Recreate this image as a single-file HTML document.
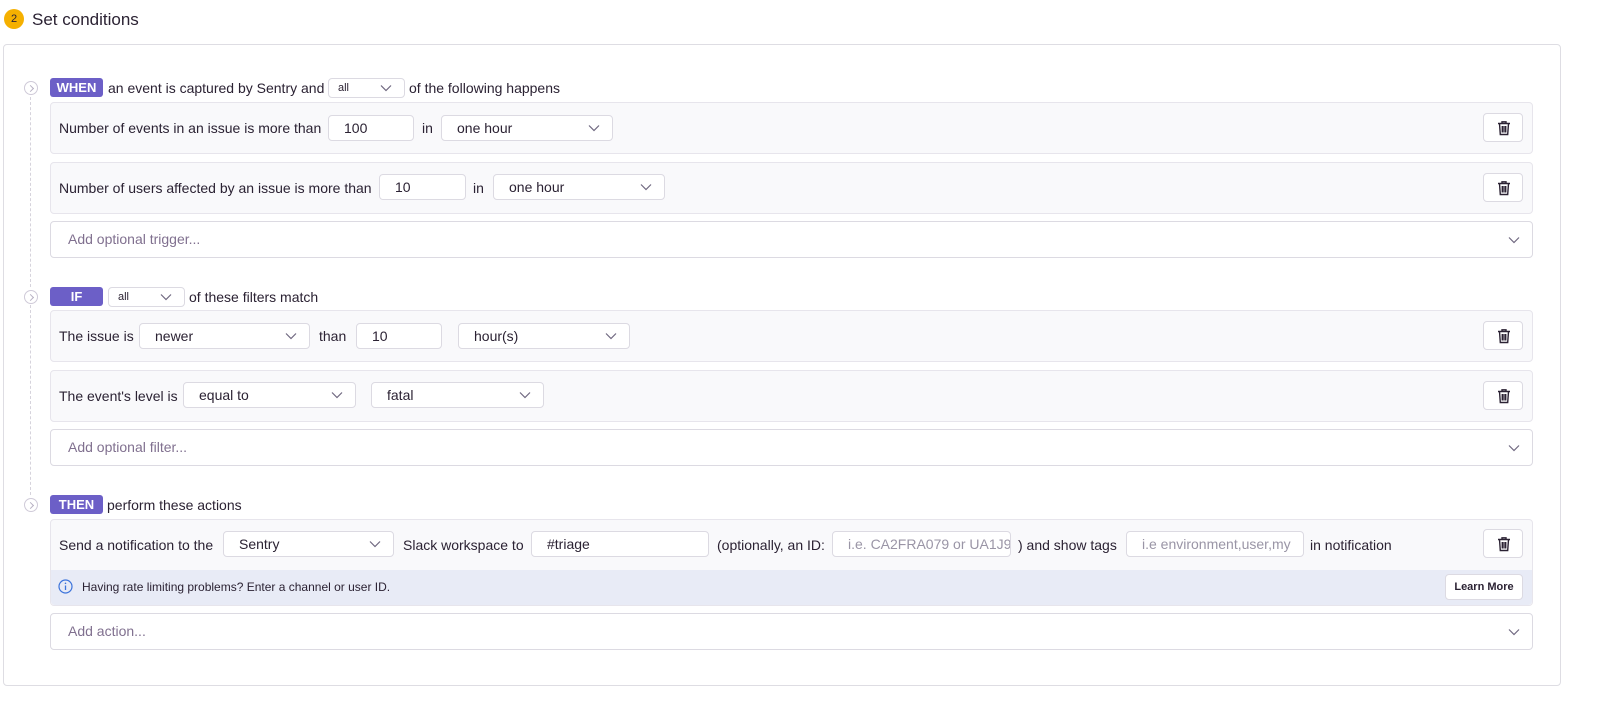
<!DOCTYPE html>
<html><head><meta charset="utf-8"><style>
*{box-sizing:border-box;margin:0;padding:0}
body{width:1600px;height:704px;background:#fff;font-family:"Liberation Sans",sans-serif;font-size:14px;color:#2b2233;position:relative;overflow:hidden}
.a{position:absolute}
.t{position:absolute;white-space:nowrap;line-height:16px}
.box{position:absolute;border:1px solid #e2e0e7;border-radius:4px}
.row{position:absolute;left:50px;width:1483px;background:#f9f9fb;border:1px solid #e7e5ec;border-radius:4px}
.inp{position:absolute;background:#fff;border:1px solid #dcdae2;border-radius:4px;height:26px;line-height:24px;padding-left:15px;white-space:nowrap;overflow:hidden}
.ph{color:#9a95a6}
.chev{position:absolute;right:12px;top:8px;width:12px;height:8px}
.badge{position:absolute;left:50px;width:53px;height:19px;background:#6c5fc7;color:#fff;font-weight:bold;border-radius:3px;text-align:center;line-height:19px;font-size:13px}
.bul{position:absolute;left:24px;width:14px;height:14px;border:1px solid #cfcad8;border-radius:50%;background:#fff}
.bul::after{content:"";position:absolute;left:3px;top:3.5px;width:4px;height:4px;border-right:1px solid #b8b2c4;border-top:1px solid #b8b2c4;transform:rotate(45deg)}
.trash{position:absolute;left:1483px;width:40px;height:29px;background:#fff;border:1px solid #dcdae2;border-radius:4px}
.add{position:absolute;left:50px;width:1483px;height:37px;background:#fff;border:1px solid #dcdae2;border-radius:4px;color:#80708f;padding-left:17px;line-height:35px}
</style></head><body>
<div class="a" style="left:4px;top:9px;width:20px;height:20px;border-radius:50%;background:#f5b000;font-size:11px;text-align:center;line-height:20px;color:#2b2233">2</div>
<div class="t" style="left:32px;top:10px;font-size:17px;line-height:20px">Set conditions</div>
<div class="box" style="left:3px;top:44px;width:1558px;height:642px;border-color:#dedde3"></div>
<div class="a" style="left:30px;top:97px;height:190px;border-left:1px dashed #d6d3dc"></div>
<div class="a" style="left:30px;top:305px;height:190px;border-left:1px dashed #d6d3dc"></div>

<svg width="0" height="0" style="position:absolute"><defs>
<symbol id="cv" viewBox="0 0 12 8"><path d="M1 1.5 L6 6.5 L11 1.5" fill="none" stroke="#6f6880" stroke-width="1.2"/></symbol>
<symbol id="tr" viewBox="0 0 16 16"><path d="M2 3.5h12M6 3.5V1.8h4v1.7M3.5 3.5l.8 11h7.4l.8-11M6.3 6v6.5M8 6v6.5M9.7 6v6.5" fill="none" stroke="#2b2233" stroke-width="1.4"/></symbol>
</defs></svg>

<!-- WHEN -->
<div class="bul" style="top:81px"></div>
<div class="badge" style="top:78px">WHEN</div>
<div class="t" style="left:108px;top:80px">an event is captured by Sentry and</div>
<div class="inp" style="left:328px;top:78px;width:77px;height:20px;line-height:18px;font-size:11px;padding-left:9px">all<svg class="chev" style="top:5px"><use href="#cv"/></svg></div>
<div class="t" style="left:409px;top:80px">of the following happens</div>

<div class="row" style="top:102px;height:52px"></div>
<div class="t" style="left:59px;top:120px">Number of events in an issue is more than</div>
<div class="inp" style="left:328px;top:115px;width:86px">100</div>
<div class="t" style="left:422px;top:120px">in</div>
<div class="inp" style="left:441px;top:115px;width:172px">one hour<svg class="chev"><use href="#cv"/></svg></div>
<div class="trash" style="top:113px"><svg style="position:absolute;left:12px;top:6px" width="16" height="16"><use href="#tr"/></svg></div>

<div class="row" style="top:162px;height:52px"></div>
<div class="t" style="left:59px;top:180px">Number of users affected by an issue is more than</div>
<div class="inp" style="left:379px;top:174px;width:87px">10</div>
<div class="t" style="left:473px;top:180px">in</div>
<div class="inp" style="left:493px;top:174px;width:172px">one hour<svg class="chev"><use href="#cv"/></svg></div>
<div class="trash" style="top:173px"><svg style="position:absolute;left:12px;top:6px" width="16" height="16"><use href="#tr"/></svg></div>

<div class="add" style="top:221px">Add optional trigger...<svg class="chev" style="top:14px;right:12px"><use href="#cv"/></svg></div>

<!-- IF -->
<div class="bul" style="top:290px"></div>
<div class="badge" style="top:287px">IF</div>
<div class="inp" style="left:108px;top:287px;width:77px;height:20px;line-height:18px;font-size:11px;padding-left:9px">all<svg class="chev" style="top:5px"><use href="#cv"/></svg></div>
<div class="t" style="left:189px;top:289px">of these filters match</div>

<div class="row" style="top:310px;height:52px"></div>
<div class="t" style="left:59px;top:328px">The issue is</div>
<div class="inp" style="left:139px;top:323px;width:171px">newer<svg class="chev"><use href="#cv"/></svg></div>
<div class="t" style="left:319px;top:328px">than</div>
<div class="inp" style="left:356px;top:323px;width:86px">10</div>
<div class="inp" style="left:458px;top:323px;width:172px">hour(s)<svg class="chev"><use href="#cv"/></svg></div>
<div class="trash" style="top:321px"><svg style="position:absolute;left:12px;top:6px" width="16" height="16"><use href="#tr"/></svg></div>

<div class="row" style="top:370px;height:52px"></div>
<div class="t" style="left:59px;top:388px">The event's level is</div>
<div class="inp" style="left:183px;top:382px;width:173px">equal to<svg class="chev"><use href="#cv"/></svg></div>
<div class="inp" style="left:371px;top:382px;width:173px">fatal<svg class="chev"><use href="#cv"/></svg></div>
<div class="trash" style="top:381px"><svg style="position:absolute;left:12px;top:6px" width="16" height="16"><use href="#tr"/></svg></div>

<div class="add" style="top:429px">Add optional filter...<svg class="chev" style="top:14px;right:12px"><use href="#cv"/></svg></div>

<!-- THEN -->
<div class="bul" style="top:498px"></div>
<div class="badge" style="top:495px">THEN</div>
<div class="t" style="left:107px;top:497px">perform these actions</div>

<div class="row" style="top:519px;height:87px"></div>
<div class="a" style="left:51px;top:570px;width:1481px;height:35px;background:#e8ebf6;border-radius:0 0 4px 4px"></div>
<div class="t" style="left:59px;top:537px">Send a notification to the</div>
<div class="inp" style="left:223px;top:531px;width:171px">Sentry<svg class="chev"><use href="#cv"/></svg></div>
<div class="t" style="left:403px;top:537px">Slack workspace to</div>
<div class="inp" style="left:531px;top:531px;width:178px">#triage</div>
<div class="t" style="left:717px;top:537px">(optionally, an ID:</div>
<div class="inp ph" style="left:832px;top:531px;width:179px">i.e. CA2FRA079 or UA1J9</div>
<div class="t" style="left:1018px;top:537px">) and show tags</div>
<div class="inp ph" style="left:1126px;top:531px;width:178px">i.e environment,user,my</div>
<div class="t" style="left:1310px;top:537px">in notification</div>
<div class="trash" style="top:529px"><svg style="position:absolute;left:12px;top:6px" width="16" height="16"><use href="#tr"/></svg></div>
<svg class="a" style="left:58px;top:579px" width="15" height="15" viewBox="0 0 15 15"><circle cx="7.5" cy="7.5" r="6.5" fill="none" stroke="#3d74db" stroke-width="1.2"/><path d="M7.5 6.5v4.5" stroke="#3d74db" stroke-width="1.3"/><circle cx="7.5" cy="4.3" r=".8" fill="#3d74db"/></svg>
<div class="t" style="left:82px;top:579px;font-size:12px">Having rate limiting problems? Enter a channel or user ID.</div>
<div class="a" style="left:1445px;top:574px;width:78px;height:26px;background:#fff;border:1px solid #dcdae2;border-radius:4px;font-size:11px;font-weight:bold;text-align:center;line-height:24px">Learn More</div>

<div class="add" style="top:613px">Add action...<svg class="chev" style="top:14px;right:12px"><use href="#cv"/></svg></div>
</body></html>
